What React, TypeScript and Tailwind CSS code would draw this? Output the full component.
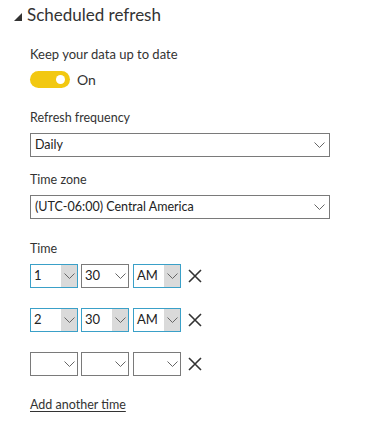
import React from "react";

const font = { fontFamily: 'Lato, "Open Sans", sans-serif' };

function Chevron() {
  return (
    <svg width="11" height="6" viewBox="0 0 11 6">
      <path d="M0.5 0.5 L5.5 5.5 L10.5 0.5" fill="none" stroke="#666" strokeWidth="1" />
    </svg>
  );
}

function Select({ text }: { text: string }) {
  return (
    <div className="flex h-[24px] w-[300px] items-center justify-between border border-[#7a7a7a] bg-white pl-[4px] pr-[4px] text-[12.5px] text-[#222]">
      <span>{text}</span>
      <Chevron />
    </div>
  );
}

function Small({ text, active, shade }: { text: string; active?: boolean; shade?: boolean }) {
  return (
    <div
      className={`flex h-[24px] w-[48px] items-stretch border bg-white text-[13px] text-[#222] ${
        active ? "border-[#3aa0c8]" : "border-[#7a7a7a]"
      }`}
    >
      <span className="flex flex-1 items-center pl-[3px]">{text}</span>
      <span className={`flex w-[16px] items-center justify-center ${shade ? "bg-[#dadada]" : ""}`}>
        <Chevron />
      </span>
    </div>
  );
}

function XIcon() {
  return (
    <svg width="14" height="14" viewBox="0 0 14 14" className="ml-[4px]">
      <path d="M1 1 L13 13 M13 1 L1 13" stroke="#333" strokeWidth="1.6" />
    </svg>
  );
}

type Cell = [string, boolean, boolean];

function Row({ a, b, c }: { a: Cell; b: Cell; c: Cell }) {
  return (
    <div className="flex items-center gap-[3px]">
      <Small text={a[0]} active={a[1]} shade={a[2]} />
      <Small text={b[0]} active={b[1]} shade={b[2]} />
      <div className="ml-[1px]">
        <Small text={c[0]} active={c[1]} shade={c[2]} />
      </div>
      <XIcon />
    </div>
  );
}

export default function App() {
  return (
    <div className="h-[421px] w-[381px] bg-white text-[#333]" style={font}>
      <div className="flex items-center pl-[14px] pt-[3px]">
        <svg width="8" height="8" viewBox="0 0 8 8" className="mr-[5px] mt-[3px]">
          <polygon points="8,0 8,8 0,8" fill="#333" />
        </svg>
        <span className="text-[17px] leading-[24px] text-[#333]">Scheduled refresh</span>
      </div>
      <div className="pl-[30px]">
        <div className="mt-[19px] text-[13px] leading-[16px]">Keep your data up to date</div>
        <div className="mt-[9px] flex items-center">
          <div className="flex h-[17px] w-[40px] items-center justify-end rounded-full bg-[#f2c811] pr-[5px]">
            <div className="h-[9px] w-[9px] rounded-full bg-white" />
          </div>
          <span className="ml-[7px] text-[14px] leading-[17px]">On</span>
        </div>
        <div className="mt-[22px] text-[12.5px] leading-[16px]">Refresh frequency</div>
        <div className="mt-[7px]">
          <Select text="Daily" />
        </div>
        <div className="mt-[15px] text-[12.5px] leading-[16px]">Time zone</div>
        <div className="mt-[7px]">
          <Select text="(UTC-06:00) Central America" />
        </div>
        <div className="mt-[22px] text-[12.5px] leading-[16px]">Time</div>
        <div className="mt-[7px] flex flex-col gap-[20px]">
          <Row a={["1", true, true]} b={["30", false, false]} c={["AM", true, true]} />
          <Row a={["2", true, true]} b={["30", true, true]} c={["AM", true, true]} />
          <Row a={["", false, false]} b={["", false, false]} c={["", false, false]} />
        </div>
        <div className="mt-[21px] text-[12.5px] leading-[16px] underline underline-offset-2">Add another time</div>
      </div>
    </div>
  );
}
